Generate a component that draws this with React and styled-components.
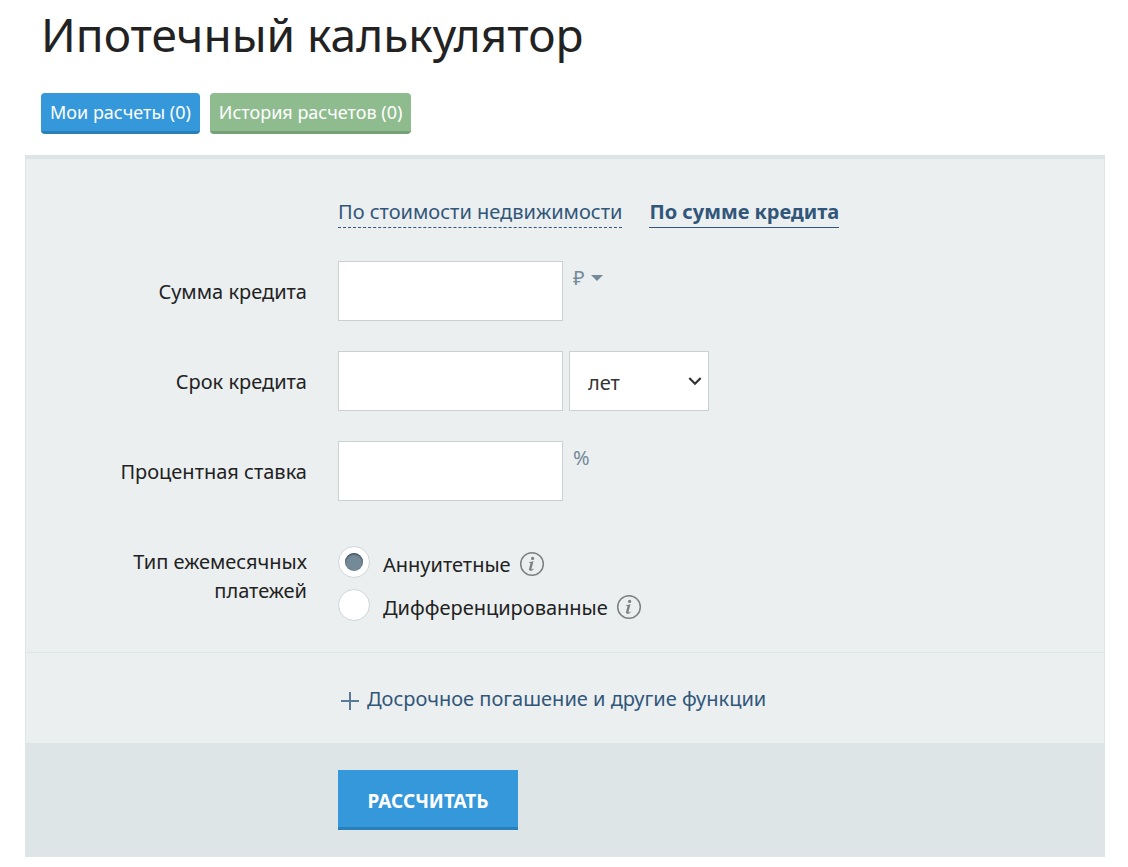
import { useState } from 'react';
import styled, { createGlobalStyle } from 'styled-components';

const App = () => {
  const [mode, setMode] = useState('sum');
  const [type, setType] = useState('annuity');

  return (
    <Page>
      <GlobalStyle />
      <Title>Ипотечный калькулятор</Title>
      <Links>
        <TopLink href="#my" $color="#3498db" $edge="#2a80b9">Мои расчеты (0)</TopLink>
        <TopLink href="#history" $color="#8fbc8f" $edge="#76a077">История расчетов (0)</TopLink>
      </Links>

      <Panel onSubmit={(e) => e.preventDefault()}>
        <Fields>
          <Tabs>
            <Tab type="button" $active={mode === 'cost'} onClick={() => setMode('cost')}>
              По стоимости недвижимости
            </Tab>
            <Tab type="button" $active={mode === 'sum'} onClick={() => setMode('sum')}>
              По сумме кредита
            </Tab>
          </Tabs>

          <Row>
            <Label htmlFor="sum">Сумма кредита</Label>
            <Controls>
              <Input id="sum" type="text" />
              <Currency type="button" aria-label="Валюта">
                ₽
                <svg width="12" height="6" viewBox="0 0 12 6">
                  <path d="M0 0h12L6 6z" fill="#758a99" />
                </svg>
              </Currency>
            </Controls>
          </Row>

          <Row>
            <Label htmlFor="term">Срок кредита</Label>
            <Controls>
              <Input id="term" type="text" />
              <SelectBox>
                <Select aria-label="Единица срока" defaultValue="years">
                  <option value="years">лет</option>
                  <option value="months">месяцев</option>
                </Select>
                <Chevron width="14" height="10" viewBox="0 0 14 10">
                  <path d="M1.3 2 7 7.7 12.7 2" fill="none" stroke="#333" strokeWidth="2.2" />
                </Chevron>
              </SelectBox>
            </Controls>
          </Row>

          <Row>
            <Label htmlFor="rate">Процентная ставка</Label>
            <Controls>
              <Input id="rate" type="text" />
              <Unit>%</Unit>
            </Controls>
          </Row>

          <TypeRow role="radiogroup" aria-labelledby="type-label">
            <TypeLabel id="type-label">Тип ежемесячных платежей</TypeLabel>
            <RadioList>
              <RadioItem
                id="annuity"
                text="Аннуитетные"
                checked={type === 'annuity'}
                onChange={setType}
              />
              <RadioItem
                id="diff"
                text="Дифференцированные"
                checked={type === 'diff'}
                onChange={setType}
              />
            </RadioList>
          </TypeRow>
        </Fields>

        <Extra>
          <ExtraButton type="button">
            <PlusIcon width="18" height="18" viewBox="0 0 18 18">
              <path d="M9 0v18M0 9h18" stroke="#5b7a97" strokeWidth="2" />
            </PlusIcon>
            Досрочное погашение и другие функции
          </ExtraButton>
        </Extra>

        <Footer>
          <Submit type="submit">РАССЧИТАТЬ</Submit>
        </Footer>
      </Panel>
    </Page>
  );
};

const RadioItem = ({ id, text, checked, onChange }) => (
  <RadioLine>
    <Radio id={id} type="radio" name="type" checked={checked} onChange={() => onChange(id)} />
    <RadioLabel htmlFor={id}>{text}</RadioLabel>
    <InfoButton type="button" aria-label="Подсказка">
      <svg width="26" height="26" viewBox="0 0 26 26">
        <circle cx="13" cy="13" r="11.3" fill="none" stroke="#7c8081" strokeWidth="1.5" />
        <circle cx="13.6" cy="7.4" r="1.6" fill="#7c8081" />
        <path
          d="M10.2 10.9c1.6 0 3-.2 4.3-.6l-2 7.4c-.2.8.3.9.8.5l1-.8.5.5c-1 1.3-2.1 1.9-3.2 1.9-1.3 0-1.8-.8-1.5-2.1l1.3-4.9c.2-.8-.1-1-1.3-1.1z"
          fill="#7c8081"
        />
      </svg>
    </InfoButton>
  </RadioLine>
);

export default App;

const GlobalStyle = createGlobalStyle`
  * {
    box-sizing: border-box;
  }

  body {
    margin: 0;
    background-color: #fff;
    color: #222;
    font-family: "Segoe UI", "Noto Sans", "Open Sans", sans-serif;
    font-size: 20px;
    line-height: 29px;
  }

  button, input, select {
    font: inherit;
  }
`;

const Page = styled.main`
  padding: 2px 23px 10px 25px;
`;

const Title = styled.h1`
  margin: 0;
  padding: 0 16px;
  font-size: 46px;
  font-weight: 400;
  line-height: 64px;
`;

const Links = styled.nav`
  display: flex;
  gap: 10px;
  padding: 27px 16px 21px;
`;

const TopLink = styled.a`
  padding: 0 9px;
  border-bottom: 3px solid ${(props) => props.$edge};
  border-radius: 4px;
  background-color: ${(props) => props.$color};
  color: #fff;
  font-size: 18px;
  line-height: 38px;
  text-decoration: none;
`;

const Panel = styled.form`
  border: 1px solid #dde5e6;
  border-top-width: 4px;
  border-bottom: none;
  background-color: #ebeff0;
`;

const Fields = styled.div`
  display: flex;
  flex-direction: column;
  gap: 30px;
  padding: 37px 0 31px;
`;

const Tabs = styled.div`
  display: flex;
  gap: 27px;
  padding-left: 312px;
  margin-bottom: 3px;
`;

const Tab = styled.button`
  padding: 0;
  border: none;
  border-bottom: 1px ${(props) => (props.$active ? 'solid' : 'dashed')} #31567a;
  background: none;
  color: #31567a;
  font-weight: ${(props) => (props.$active ? 700 : 400)};
  line-height: 31px;
  cursor: pointer;
`;

const Row = styled.div`
  display: grid;
  grid-template-columns: 281px 1fr;
  column-gap: 31px;
  align-items: center;
`;

const TypeRow = styled(Row)`
  align-items: start;
  padding-top: 15px;
`;

const Label = styled.label`
  text-align: right;
`;

const TypeLabel = styled.div`
  padding: 1px 0 0 80px;
  text-align: right;
`;

const Controls = styled.div`
  display: flex;
  gap: 6px;
`;

const Input = styled.input`
  width: 225px;
  height: 60px;
  padding: 0 14px;
  border: 1px solid #cbd0d3;
  border-radius: 0;
  background-color: #fff;
`;

const SelectBox = styled.div`
  position: relative;
`;

const Select = styled.select`
  appearance: none;
  display: block;
  width: 140px;
  height: 60px;
  padding: 2px 30px 0 18px;
  border: 1px solid #cbd0d3;
  border-radius: 0;
  background-color: #fff;
  color: #333;
`;

const Chevron = styled.svg`
  position: absolute;
  top: 25px;
  right: 7px;
  pointer-events: none;
`;

const Unit = styled.span`
  padding: 2px 4px;
  color: #758a99;
`;

const Currency = styled.button`
  display: flex;
  align-items: center;
  align-self: flex-start;
  gap: 6px;
  padding: 2px 4px;
  border: none;
  background: none;
  color: #758a99;
  cursor: pointer;
`;

const RadioList = styled.div`
  display: flex;
  flex-direction: column;
  gap: 11px;
`;

const RadioLine = styled.div`
  display: flex;
  align-items: center;
  height: 32px;
`;

const Radio = styled.input`
  appearance: none;
  display: grid;
  place-items: center;
  width: 32px;
  height: 32px;
  margin: 0;
  border: 1px solid #cfd5da;
  border-radius: 50%;
  background-color: #fff;

  &:checked::before {
    content: '';
    width: 18px;
    height: 18px;
    border-radius: 50%;
    background-color: #758a99;
    box-shadow: inset 0 1px 2px #2f4150;
  }
`;

const RadioLabel = styled.label`
  padding: 4px 8px 0 13px;
`;

const InfoButton = styled.button`
  display: flex;
  padding: 3px 0 0;
  border: none;
  background: none;
  cursor: pointer;
`;

const Extra = styled.div`
  padding: 31px 0 30px 315px;
  border-top: 1px solid #dde5e6;
`;

const ExtraButton = styled.button`
  display: flex;
  align-items: center;
  gap: 8px;
  padding: 0;
  border: none;
  background: none;
  color: #31567a;
  cursor: pointer;
`;

const PlusIcon = styled.svg`
  margin-top: 4px;
`;

const Footer = styled.div`
  padding: 27px 0 27px 312px;
  background-color: #dde5e6;
`;

const Submit = styled.button`
  display: block;
  width: 180px;
  height: 60px;
  padding: 6px 0 0;
  border: none;
  border-bottom: 3px solid #2a80b9;
  background-color: #3498db;
  color: #fff;
  font-size: 19px;
  font-weight: 700;
  cursor: pointer;
`;
